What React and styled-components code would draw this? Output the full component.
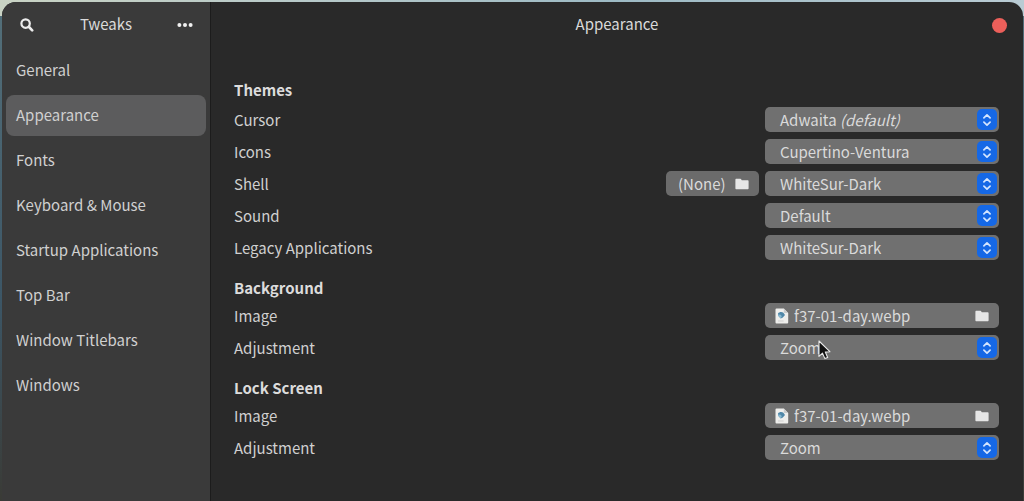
import { useState } from 'react';
import styled, { createGlobalStyle } from 'styled-components';

const pages = [
    'General',
    'Appearance',
    'Fonts',
    'Keyboard & Mouse',
    'Startup Applications',
    'Top Bar',
    'Window Titlebars',
    'Windows'
];

const sections = [
    {
        title: 'Themes',
        rows: [
            { id: 'cursor', label: 'Cursor', options: ['Adwaita'], hint: '(default)' },
            { id: 'icons', label: 'Icons', options: ['Cupertino-Ventura', 'Adwaita'] },
            { id: 'shell', label: 'Shell', options: ['WhiteSur-Dark', 'Default'], picker: '(None)' },
            { id: 'sound', label: 'Sound', options: ['Default'] },
            { id: 'legacy', label: 'Legacy Applications', options: ['WhiteSur-Dark', 'Adwaita'] }
        ]
    },
    {
        title: 'Background',
        rows: [
            { id: 'bg-image', label: 'Image', file: 'f37-01-day.webp' },
            { id: 'bg-adjustment', label: 'Adjustment', options: ['Zoom', 'Centered', 'Scaled'], pointer: true }
        ]
    },
    {
        title: 'Lock Screen',
        rows: [
            { id: 'lock-image', label: 'Image', file: 'f37-01-day.webp' },
            { id: 'lock-adjustment', label: 'Adjustment', options: ['Zoom', 'Centered', 'Scaled'] }
        ]
    }
];

function SearchIcon(){
    return(
        <svg width="14" height="14" viewBox="0 0 14 14" fill="none" stroke="#ececec" strokeWidth="2.2" strokeLinecap="round">
            <circle cx="5.6" cy="5.6" r="4.2" />
            <path d="M9 9l3.2 3.4" strokeWidth="2.6" />
        </svg>
    )
}

function DotsIcon(){
    return(
        <svg width="16" height="6" viewBox="0 0 16 6" fill="#f0f0f0">
            <circle cx="2.4" cy="3" r="2" />
            <circle cx="8" cy="3" r="2" />
            <circle cx="13.6" cy="3" r="2" />
        </svg>
    )
}

function FolderIcon(){
    return(
        <svg width="14" height="12" viewBox="0 0 14 12" fill="#e6e6e6">
            <path d="M1.4.8h3.9c.5 0 .8.2 1 .6l.5.9h5.8c.6 0 1 .4 1 1v6.9c0 .6-.4 1-1 1H1.4c-.6 0-1-.4-1-1V1.8c0-.6.4-1 1-1z" />
        </svg>
    )
}

function ImageFileIcon(){
    return(
        <svg width="14" height="16" viewBox="0 0 14 16">
            <path d="M1.5.5h7.3l4.4 4.4v9.6a1 1 0 0 1-1 1H1.5a1 1 0 0 1-1-1v-13a1 1 0 0 1 1-1z" fill="#eeeeec" />
            <path d="M8.8.5v3.4a1 1 0 0 0 1 1h3.4z" fill="#c9cbcb" />
            <path d="M3 5.4c1.2-1.8 4.2-2 5.4-.6L10 7 7.8 9.4l-2 1.2-1.5-1.7L3 7.6z" fill="#4f87a8" />
            <path d="M3 6.6l2.8.2 1 1.5-1 2.3-1.5-1.7L3 7.6z" fill="#87b7cf" />
            <path d="M3 13h5.6" stroke="#cfcfcf" />
        </svg>
    )
}

function ArrowsIcon(){
    return(
        <svg width="10" height="14" viewBox="0 0 10 14" fill="none" stroke="#d3e5ff" strokeWidth="1.7" strokeLinecap="round" strokeLinejoin="round">
            <path d="M1.9 4.8L5 1.8l3.1 3M1.9 9.2l3.1 3 3.1-3" />
        </svg>
    )
}

function PointerIcon(){
    return(
        <svg width="13" height="20" viewBox="0 0 13 20">
            <path d="M1 1v15.4l3.5-3.2 2.4 5.4 2.8-1.2-2.4-5.3 4.6-.4z" fill="#111111" stroke="#e8e8e8" strokeWidth="1.1" strokeLinejoin="round" />
        </svg>
    )
}

function Dropdown({ row }){
    const [value, setValue] = useState(row.options[0]);

    return(
        <DropdownBox>
            <Select id={row.id} value={value} onChange={e => setValue(e.target.value)} $hasHint={!!row.hint}>
                {row.options.map(o => <option key={o} value={o}>{o}</option>)}
            </Select>
            {row.hint && <Hint aria-hidden="true">{value} <em>{row.hint}</em></Hint>}
            <Arrows><ArrowsIcon /></Arrows>
            {row.pointer && <Pointer><PointerIcon /></Pointer>}
        </DropdownBox>
    )
}

export default function App(){
    const [current, setCurrent] = useState('Appearance');

    return(
        <Desktop>
            <GlobalStyle />
            <Window>
                <Sidebar>
                    <SideHeader>
                        <IconButton aria-label="Search"><SearchIcon /></IconButton>
                        <Title>Tweaks</Title>
                        <IconButton aria-label="Menu"><DotsIcon /></IconButton>
                    </SideHeader>
                    <Nav>
                        {pages.map(p =>
                            <NavItem key={p} $active={p === current} onClick={() => setCurrent(p)}>{p}</NavItem>
                        )}
                    </Nav>
                </Sidebar>
                <Main>
                    <MainHeader>
                        <Title>Appearance</Title>
                        <CloseButton aria-label="Close" />
                    </MainHeader>
                    <Content>
                        {sections.map(s =>
                            <section key={s.title}>
                                <Heading>{s.title}</Heading>
                                {s.rows.map(row =>
                                    <Row key={row.id}>
                                        <Label htmlFor={row.id}>{row.label}</Label>
                                        {row.picker && <PickerButton>{row.picker}<FolderIcon /></PickerButton>}
                                        {row.file
                                            ? <FileButton id={row.id}>
                                                <ImageFileIcon />
                                                <FileName>{row.file}</FileName>
                                                <FolderIcon />
                                            </FileButton>
                                            : <Dropdown row={row} />}
                                    </Row>
                                )}
                            </section>
                        )}
                    </Content>
                </Main>
            </Window>
        </Desktop>
    )
}

const GlobalStyle = createGlobalStyle`
    * {
        box-sizing: border-box;
    }
    body {
        margin: 0;
        background: #292929;
    }
    body, button, select {
        font-family: 'Noto Sans CJK SC', 'Noto Sans', sans-serif;
        font-size: 15px;
        color: #d0d0d0;
    }
    button, select {
        border: 0;
        padding: 0;
        background: none;
    }
    svg {
        display: block;
        flex: none;
    }
`

const Desktop = styled.div`
    min-height: 100vh;
    padding: 2px 1px 0 2px;
    display: flex;
    background: linear-gradient(90deg, #c9d3c4, #b7c9c9 30%, #9dbac4 60%, #b9cbd3) top / 100% 16px no-repeat,
        linear-gradient(#54707a, #3c5666 60%, #3a3b36);
`

const Window = styled.div`
    flex: 1;
    display: flex;
    border-radius: 14px 14px 0 0;
    overflow: hidden;
    background: #292929;
`

const Sidebar = styled.aside`
    flex: 0 0 209px;
    background: #3a3a3a;
    border-right: 1px solid #1c1c1c;
`

const SideHeader = styled.header`
    height: 46px;
    padding: 0 16px;
    display: flex;
    align-items: center;
    justify-content: space-between;
`

const Title = styled.h1`
    margin: 0;
    padding-bottom: 2px;
    font-size: 15px;
    line-height: 24px;
    font-weight: 400;
    color: #dadada;
`

const IconButton = styled.button`
    width: 18px;
    height: 24px;
    display: flex;
    align-items: center;
    justify-content: center;
`

const Nav = styled.nav`
    padding: 2px 4px;
    display: flex;
    flex-direction: column;
    gap: 4px;
`

const NavItem = styled.button`
    height: 41px;
    padding: 0 10px 2px;
    border-radius: 8px;
    text-align: left;
    background: ${props => props.$active ? '#5c5c5d' : 'transparent'};
`

const Main = styled.main`
    flex: 1;
    min-width: 0;
`

const MainHeader = styled.header`
    height: 46px;
    padding: 0 16px;
    display: grid;
    grid-template-columns: 1fr auto 1fr;
    align-items: center;
    ${Title} {
        grid-column: 2;
    }
`

const CloseButton = styled.button`
    width: 15px;
    height: 15px;
    justify-self: end;
    border-radius: 50%;
    background: #ec5f5a;
`

const Content = styled.div`
    padding: 30px 24px 24px 23px;
    display: flex;
    flex-direction: column;
    gap: 12px;
`

const Heading = styled.h2`
    margin: 0;
    padding-bottom: 2px;
    font-size: 15px;
    line-height: 24px;
    font-weight: 700;
    color: #dcdcdc;
    section + section & {
        padding-bottom: 0;
    }
`

const Row = styled.div`
    padding: 3px 0 4px;
    display: flex;
    gap: 6px;
`

const Label = styled.label`
    flex: 1;
    line-height: 25px;
`

const DropdownBox = styled.div`
    position: relative;
    width: 234px;
    height: 25px;
    display: grid;
    grid-template-columns: 1fr 24px;
    border-radius: 5px;
    background: #707070;
    > * {
        grid-row: 1;
    }
`

const Select = styled.select`
    grid-column: 1 / 3;
    appearance: none;
    padding: 0 24px 0 15px;
    border-radius: 5px;
    line-height: 25px;
    color: ${props => props.$hasHint ? 'transparent' : '#dadada'};
    option {
        color: #dadada;
        background: #3a3a3a;
    }
`

const Hint = styled.span`
    grid-column: 1;
    padding-left: 15px;
    line-height: 25px;
    color: #dadada;
    pointer-events: none;
`

const Arrows = styled.span`
    grid-column: 2;
    width: 20px;
    height: 21px;
    margin: 2px;
    display: flex;
    align-items: center;
    justify-content: center;
    border-radius: 5px;
    background: #1568e6;
    pointer-events: none;
`

const Pointer = styled.span`
    position: absolute;
    left: 53px;
    top: 5px;
    pointer-events: none;
`

const PickerButton = styled.button`
    width: 93px;
    height: 25px;
    padding: 0 10px 0 12px;
    display: flex;
    align-items: center;
    justify-content: space-between;
    border-radius: 5px;
    background: #6b6b6b;
    color: #dadada;
    line-height: 25px;
`

const FileButton = styled.button`
    width: 234px;
    height: 25px;
    padding: 0 10px;
    display: flex;
    align-items: center;
    gap: 5px;
    border-radius: 5px;
    background: #707070;
    color: #dadada;
`

const FileName = styled.span`
    flex: 1;
    text-align: left;
    line-height: 25px;
`
